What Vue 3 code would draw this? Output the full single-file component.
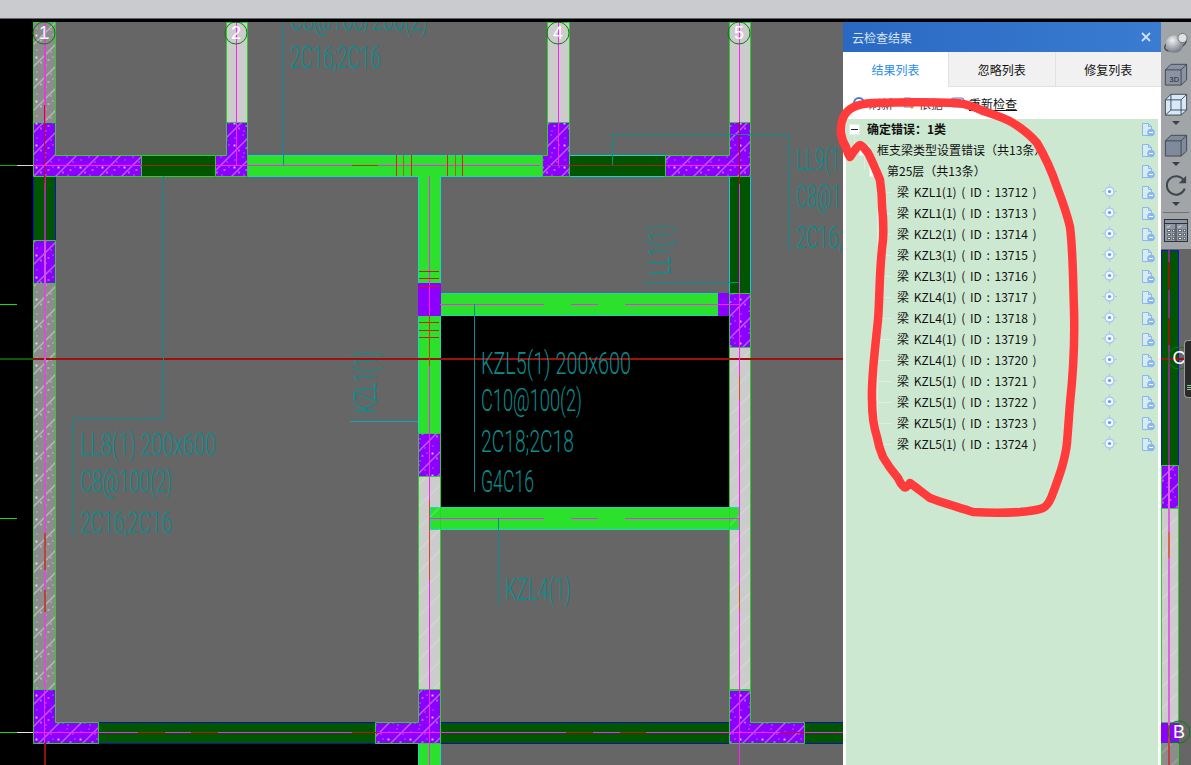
<template>
  <div class="app">
    <div class="titlebar"></div>
    <div class="stage">
      <!-- CAD canvas, coordinates are window pixels -->
      <svg class="cad" width="1191" height="746" viewBox="0 19 1191 746">
        <defs>
          <pattern id="hatch" width="22" height="22" patternUnits="userSpaceOnUse" patternTransform="translate(33 0)">
            <path d="M-2 24 24 -2" stroke="#fff" stroke-opacity=".75" stroke-width="1" />
            <g fill="#fff" fill-opacity=".7">
              <rect x="3" y="5" width="1" height="1" />
              <rect x="14" y="15" width="2" height="1" />
              <rect x="7" y="17" width="1" height="2" />
              <rect x="17" y="7" width="1" height="1" />
              <rect x="11" y="2" width="1" height="1" />
              <rect x="19" y="12" width="1" height="1" />
              <rect x="2" y="12" width="2" height="2" />
              <rect x="12" y="20" width="1" height="1" />
            </g>
          </pattern>
          <pattern id="hatch-soft" width="22" height="22" patternUnits="userSpaceOnUse">
            <path d="M-2 24 24 -2" stroke="#fff" stroke-opacity=".35" stroke-width="1" />
          </pattern>
        </defs>

        <rect x="0" y="19" width="1191" height="746" fill="#000" />
        <rect x="33" y="22" width="1158" height="721" fill="#666" />
        <rect x="418" y="743" width="773" height="22" fill="#666" />
        <rect x="440" y="315" width="289" height="192" fill="#000" />

        <g transform="translate(.5 .5)">
          <path v-for="(d, i) in fills" :key="'f' + i" :d="d.d" :fill="d.fill" :stroke="d.stroke || d.fill" stroke-width="1" />
          <path v-for="(d, i) in hatched" :key="'h' + i" :d="d" fill="url(#hatch)" stroke="#2ccf2c" stroke-width="1" />
          <path v-for="(d, i) in softHatched" :key="'s' + i" :d="d" fill="url(#hatch-soft)" stroke="#2ccf2c" stroke-width="1" />
        </g>

        <rect v-for="(l, i) in drawLines" :key="'l' + i" :x="l.x" :y="l.y" :width="l.w" :height="l.h" :fill="l.c" />

        <g class="cad-text">
          <text v-for="t in labels" :key="t.s + t.y" :x="t.x" :y="t.y" :textLength="t.w" lengthAdjust="spacingAndGlyphs" fill="#0a8c8c">{{ t.s }}</text>
          <text transform="translate(670 275) rotate(-90)" textLength="50" lengthAdjust="spacingAndGlyphs" fill="#0a8c8c">LL1(1)</text>
          <text transform="translate(376 413) rotate(-90)" textLength="62" lengthAdjust="spacingAndGlyphs" fill="#0a8c8c">KZL1(1)</text>
        </g>

        <g v-for="b in bubbles" :key="b.s">
          <circle :cx="b.x" :cy="b.y" r="11" fill="none" stroke="#0b7d0b" />
          <text class="bubble-text" :x="b.x" :y="b.y + 6" text-anchor="middle">{{ b.s }}</text>
        </g>

        <rect x="0" y="19" width="1191" height="3" fill="#000" />
      </svg>

      <!-- dark handle at the right edge -->
      <div class="handle">
        <span></span><span></span><span></span>
      </div>

      <aside class="panel">
        <header class="panel-head">
          <span>云检查结果</span>
          <svg width="10" height="10" viewBox="0 0 10 10"><path d="M1 1 9 9M9 1 1 9" stroke="#cfe0f6" stroke-width="1.8" /></svg>
        </header>
        <nav class="tabs">
          <div class="tab active">结果列表</div>
          <div class="tab">忽略列表</div>
          <div class="tab">修复列表</div>
        </nav>
        <div class="tools">
          <span class="tool">
            <svg width="14" height="14" viewBox="0 0 14 14"><circle cx="7" cy="7" r="5" fill="none" stroke="#3f7fd0" stroke-width="2" /></svg>
            刷新
          </span>
          <span class="tool">
            <svg width="14" height="14" viewBox="0 0 14 14"><path d="M2 2h7v9H2z" fill="#fff" stroke="#5d8fd0" /><path d="M8 9l3 3" stroke="#e8922c" stroke-width="3" /></svg>
            依据
          </span>
          <span class="tool link">
            <svg width="16" height="14" viewBox="0 0 16 14"><rect x="1" y="2" width="13" height="9" rx="2" fill="#cfe4fa" stroke="#4d8ad6" /></svg>
            重新检查
          </span>
        </div>
        <div class="tree">
          <div v-for="(r, i) in rows" :key="i" class="row" :class="'lv' + r.level">
            <span v-if="r.level < 3" class="box"><i v-if="r.level === 0"></i></span>
            <span v-else class="dash"></span>
            <span class="label">{{ r.text }}</span>
            <svg v-if="r.level === 3" class="target" width="15" height="15" viewBox="0 0 15 15">
              <circle cx="7.500" cy="7.500" r="4.500" fill="#f4f8ff" stroke="#a8c8f4" stroke-width="1.400" />
              <circle cx="7.500" cy="7.500" r="1.600" fill="#5f9cec" />
              <path d="M7.500 0v2.500M7.500 12.500V15M0 7.500h2.500M12.500 7.500H15" stroke="#a8c8f4" />
            </svg>
            <svg class="doc" width="14" height="15" viewBox="0 0 14 15">
              <path d="M1.500 1.500h6l3 3V13.500h-9z" fill="#d8ecec" stroke="#8ab6f2" />
              <path d="M7.500 1.500v3h3" fill="none" stroke="#8ab6f2" />
              <circle cx="10" cy="10.500" r="3.800" fill="#8ab6f2" />
              <path d="M8 10.500h4" stroke="#fff" />
            </svg>
          </div>
        </div>
      </aside>

      <div class="rail">
        <svg class="globe" width="24" height="22" viewBox="0 0 24 22">
          <defs>
            <radialGradient id="ball" cx="38%" cy="30%" r="75%">
              <stop offset="0" stop-color="#f0f1f3" />
              <stop offset="1" stop-color="#6d747e" />
            </radialGradient>
          </defs>
          <ellipse cx="11.500" cy="12" rx="11.500" ry="5.500" fill="none" stroke="#4e535a" stroke-width="1.500" transform="rotate(-24 11.500 12)" />
          <circle cx="10.500" cy="12" r="8.800" fill="url(#ball)" />
          <circle cx="18.500" cy="6" r="4.600" fill="#dfe2e5" stroke="#6f747c" />
        </svg>
        <svg class="cube-a" width="24" height="24" viewBox="0 0 26 26">
          <path d="M1.500 8.500 7.500 2.500h17v17l-6 5.500H1.500z" fill="#8a94a4" stroke="#3f444c" />
          <path d="M1.500 8.500h17l6-6M18.500 8.500V25" fill="none" stroke="#3f444c" />
          <text class="rail-3d" x="6" y="22">3D</text>
        </svg>
        <svg width="24" height="24" viewBox="0 0 26 26">
          <path d="M1.500 8.500 7.500 2.500h17v17l-6 5.500H1.500z" fill="#d8e8fb" stroke="#3f444c" />
          <path d="M1.500 8.500h17l6-6M18.500 8.500V25M7.500 2.500v17h17M7.500 19.500l-6 5.500" fill="none" stroke="#3f444c" />
        </svg>
        <i class="caret c-a"></i>
        <svg width="24" height="24" viewBox="0 0 26 26">
          <path d="M1.500 8.500 7.500 2.500h17v17l-6 5.500H1.500z" fill="#7f8a9c" stroke="#3f444c" />
          <path d="M1.500 8.500h17l6-6M18.500 8.500V25" fill="none" stroke="#3f444c" />
        </svg>
        <i class="caret c-b"></i>
        <svg width="24" height="24" viewBox="0 0 26 26">
          <path d="M21.500 8A10 10 0 1 0 22.500 17" fill="none" stroke="#3f4650" stroke-width="2.200" />
          <path d="M24 3v8h-8z" fill="#3f4650" />
        </svg>
        <i class="caret"></i>
        <div class="rail-sep"></div>
        <svg width="24" height="24" viewBox="0 0 24 24">
          <rect x="0.500" y="1.500" width="23" height="22" fill="#8d96a4" stroke="#2e3238" />
          <path d="M.5 5.500h23M12 5.500v18" stroke="#2e3238" />
          <path d="M3 8.500l1 1 2-2M14 8.500l1 1 2-2" fill="none" stroke="#f0f2f4" />
          <path d="M3.500 11.500h3v2h-3zM8.500 11.500h2v2h-2zM3.500 15.500h3v2h-3zM8.500 15.500h2v2h-2zM3.500 19.500h3v2h-3zM8.500 19.500h2v2h-2zM14.500 11.500h3v2h-3zM19.500 11.500h2v2h-2zM14.500 15.500h3v2h-3zM19.500 15.500h2v2h-2zM14.500 19.500h3v2h-3zM19.500 19.500h2v2h-2z" fill="#eef0f2" stroke="#2e3238" stroke-width=".6" />
        </svg>
      </div>

      <!-- red marker drawn on top of the screenshot -->
      <svg class="pen" width="1191" height="746" viewBox="0 19 1191 746">
        <path :d="penPath" fill="none" stroke="#ff3b3b" stroke-width="8.500" stroke-linecap="round" stroke-linejoin="round" />
      </svg>
    </div>
  </div>
</template>

<script setup>
const DARK = '#005500'
const GREEN = '#2be12b'
const PURPLE = '#8c00ff'
const LIGHT = '#cccccc'
const TEAL = '#0a8c8c'
const MAG = '#ff20ff'
const RED = '#c81010'

// base colour of walls, beams and columns
const fills = [
  { d: 'M33 22h22v100H33z', fill: '#8c8c8c', stroke: '#2ccf2c' },
  { d: 'M33 283h22v406H33z', fill: '#8c8c8c', stroke: '#2ccf2c' },
  { d: 'M226 22h21v100h-21zM547 22h22v100h-22z', fill: LIGHT, stroke: '#2ccf2c' },
  { d: 'M729 22h21v100h-21z', fill: LIGHT, stroke: '#2ccf2c' },
  { d: 'M729 347h21v343h-21zM418 476h22v213h-22z', fill: LIGHT, stroke: '#2ccf2c' },
  { d: 'M1161 508h17v214h-17z', fill: LIGHT, stroke: '#18d818' },
  { d: 'M1161 743h17v22h-17z', fill: '#8c8c8c', stroke: '#18d818' },
  { d: 'M247 155h295v21H440v107h-22V176H247z', fill: GREEN, stroke: '#12d8c8' },
  { d: 'M418 315h22v118h-22z', fill: GREEN, stroke: '#12d8c8' },
  { d: 'M418 743h22v22h-22z', fill: GREEN, stroke: '#12d8c8' },
  { d: 'M440 293h289v22H440z', fill: GREEN, stroke: '#12d8c8' },
  { d: 'M430 507h309v22H430z', fill: GREEN, stroke: '#12d8c8' },
  { d: 'M141 155h74v21h-74z', fill: DARK, stroke: '#2ccf2c' },
  { d: 'M569 155h96v21h-96z', fill: DARK, stroke: '#12d8c8' },
  { d: 'M729 176h21v117h-21z', fill: DARK, stroke: '#12c8d8' },
  { d: 'M33 176h22v64H33z', fill: DARK, stroke: '#1010d0' },
  { d: 'M98 722h277v21H98z', fill: DARK, stroke: '#1010b0' },
  { d: 'M440 722h289v21H440z', fill: DARK, stroke: '#1010b0' },
  { d: 'M804 722h39v21h-39z', fill: DARK, stroke: '#1010b0' },
  { d: 'M1161 250h17v215h-17z', fill: DARK, stroke: '#1010e0' },
  { d: 'M33 122h22v33h86v21H33z', fill: PURPLE },
  { d: 'M226 122h21v54h-32v-21h11z', fill: PURPLE },
  { d: 'M547 122h22v54h-27v-21h5z', fill: PURPLE },
  { d: 'M729 122h21v54h-85v-21h64z', fill: PURPLE },
  { d: 'M33 240h22v43H33z', fill: PURPLE },
  { d: 'M729 293h21v54h-21z', fill: PURPLE },
  { d: 'M418 283h22v32h-22z', fill: PURPLE },
  { d: 'M718 293h11v22h-11z', fill: PURPLE },
  { d: 'M418 433h22v43h-22z', fill: PURPLE },
  { d: 'M33 689h22v33h43v21H33z', fill: PURPLE },
  { d: 'M418 689h22v54h-65v-21h43z', fill: PURPLE },
  { d: 'M729 689h21v33h54v21h-75z', fill: PURPLE },
  { d: 'M1161 465h17v43h-17z', fill: PURPLE },
  { d: 'M1161 722h17v21h-17z', fill: PURPLE }
]

// strong hatch on columns, thin hatch on plain walls
const hatched = [
  'M33 122h22v33h86v21H33z',
  'M226 122h21v54h-32v-21h11z',
  'M547 122h22v54h-27v-21h5z',
  'M729 122h21v54h-85v-21h64z',
  'M33 240h22v43H33z',
  'M729 293h21v54h-21z',
  'M418 433h22v43h-22z',
  'M33 689h22v33h43v21H33z',
  'M418 689h22v54h-65v-21h43z',
  'M729 689h21v33h54v21h-75z',
  'M33 22h22v100H33z',
  'M33 283h22v406H33z',
  'M1161 465h17v43h-17z'
]
const softHatched = [
  'M729 347h21v343h-21z',
  'M418 476h22v213h-22z',
  'M1161 508h17v214h-17z',
  'M1161 743h17v22h-17z'
]

// [x1, y1, x2, y2, colour, width]
const lines = [
  // axis lines
  [0, 358, 843, 358, '#a01010', 2],
  [0, 358, 33, 358, '#0a5a0a', 2],
  [1161, 358, 1191, 358, '#a01010', 2],
  [44, 22, 44, 122, '#e040e0', 2],
  [44, 122, 44, 176, MAG, 1],
  [44, 176, 44, 240, '#9a30a0', 2],
  [44, 240, 44, 689, '#d850d8', 2],
  [44, 689, 44, 743, MAG, 1],
  [44, 105, 44, 183, RED, 1],
  [44, 533, 44, 570, '#c04040', 2],
  [44, 590, 44, 612, '#c04040', 2],
  [236, 22, 236, 165, MAG],
  [558, 22, 558, 165, MAG],
  [739, 22, 739, 765, MAG],
  [429, 176, 429, 765, MAG],
  [1168, 250, 1168, 465, '#8a2a8a', 2],
  [1168, 262, 1168, 290, '#8a1a10', 2],
  [1168, 318, 1168, 345, '#8a1a10', 2],
  [1168, 465, 1168, 765, '#e060e0', 2],
  [1168, 532, 1168, 558, '#e06050', 2],
  [1168, 725, 1168, 765, '#c04040', 2],
  [33, 165, 540, 165, MAG],
  [547, 165, 729, 165, '#a030a0'],
  [665, 165, 750, 165, MAG],
  [440, 304, 544, 304, MAG],
  [571, 304, 598, 304, MAG],
  [625, 304, 739, 304, MAG],
  [430, 518, 544, 518, MAG],
  [571, 518, 598, 518, MAG],
  [625, 518, 739, 518, MAG],
  [33, 732, 843, 732, MAG],
  [138, 732, 165, 732, RED, 1],
  [191, 732, 218, 732, RED, 1],
  [352, 732, 380, 732, RED, 1],
  [566, 732, 593, 732, RED, 1],
  [620, 732, 646, 732, RED, 1],
  [780, 732, 804, 732, RED, 1],
  [141, 165, 215, 165, '#a02020'],
  [352, 165, 378, 165, '#c03010'],
  [569, 165, 665, 165, '#a02020'],
  // ticks left of the drawing
  [0, 165, 17, 165, '#10b010'],
  [17, 165, 33, 165, '#d8d8d8'],
  [0, 304, 17, 304, '#10e010'],
  [0, 518, 17, 518, '#10e010'],
  [0, 732, 17, 732, '#10e010'],
  [17, 732, 33, 732, '#e8e8e8'],
  // rebar ticks
  [396, 155, 396, 176, '#e02010'],
  [403, 155, 403, 176, '#b06010'],
  [411, 155, 411, 176, '#e02010'],
  [447, 155, 447, 176, '#e02010'],
  [455, 155, 455, 176, '#b06010'],
  [462, 155, 462, 176, '#e02010'],
  [419, 271, 439, 271, '#c82010'],
  [419, 278, 439, 278, '#c82010'],
  [419, 286, 439, 286, '#e01010'],
  [419, 322, 439, 322, '#c82010'],
  [419, 330, 439, 330, '#c82010'],
  [419, 337, 439, 337, '#c82010'],
  [429, 315, 429, 366, '#c04010'],
  [739, 122, 739, 184, '#b01010'],
  [739, 375, 739, 400, '#d05030'],
  [739, 585, 739, 610, '#d05030'],
  [429, 500, 429, 580, '#d84030'],
  [44, 743, 44, 765, '#901010', 2],
  // leaders
  [283, 22, 283, 165, '#0a8ca0'],
  [163, 176, 163, 419, TEAL],
  [163, 419, 73, 419, TEAL],
  [73, 419, 73, 536, TEAL],
  [474, 304, 474, 492, TEAL],
  [498, 518, 498, 606, TEAL],
  [612, 134, 612, 165, TEAL],
  [612, 134, 788, 134, TEAL],
  [788, 134, 788, 251, TEAL],
  [644, 282, 739, 282, TEAL],
  [350, 421, 418, 421, '#0aa8b8']
]

// plain pixel rects, so every line stays sharp
const drawLines = lines.map(([x1, y1, x2, y2, c, w = 1]) => ({
  x: x1 === x2 ? x1 : Math.min(x1, x2),
  y: y1 === y2 ? y1 : Math.min(y1, y2),
  w: x1 === x2 ? w : Math.abs(x2 - x1),
  h: y1 === y2 ? w : Math.abs(y2 - y1),
  c
}))

const labels = [
  { s: 'C8@100/200(2)', x: 290, y: 30, w: 138 },
  { s: '2C16;2C16', x: 290, y: 68, w: 91 },
  { s: 'LL8(1) 200x600', x: 80, y: 455, w: 136 },
  { s: 'C8@100(2)', x: 80, y: 492, w: 92 },
  { s: '2C16;2C16', x: 80, y: 533, w: 92 },
  { s: 'KZL5(1) 200x600', x: 481, y: 374, w: 150 },
  { s: 'C10@100(2)', x: 481, y: 411, w: 101 },
  { s: '2C18;2C18', x: 481, y: 452, w: 93 },
  { s: 'G4C16', x: 481, y: 492, w: 53 },
  { s: 'KZL4(1)', x: 505, y: 600, w: 66 },
  // the panel hides the rest of these three
  { s: 'LL9(1', x: 796, y: 170, w: 44 },
  { s: 'C8@1', x: 796, y: 207, w: 45 },
  { s: '2C16;', x: 796, y: 248, w: 46 }
]

const bubbles = [
  { s: '1', x: 44, y: 33 },
  { s: '2', x: 236, y: 33 },
  { s: '4', x: 558, y: 33 },
  { s: '5', x: 739, y: 33 },
  { s: 'C', x: 1179, y: 358 },
  { s: 'B', x: 1179, y: 732 }
]

const leafs = [
  ['KZL1', 13712], ['KZL1', 13713], ['KZL2', 13714], ['KZL3', 13715], ['KZL3', 13716],
  ['KZL4', 13717], ['KZL4', 13718], ['KZL4', 13719], ['KZL4', 13720],
  ['KZL5', 13721], ['KZL5', 13722], ['KZL5', 13723], ['KZL5', 13724]
]

const rows = [
  { level: 0, text: '确定错误：1类' },
  { level: 1, text: '框支梁类型设置错误（共13条）' },
  { level: 2, text: '第25层（共13条）' },
  ...leafs.map(([name, id]) => ({ level: 3, text: `梁 ${name}(1) ( ID : ${id} )` }))
]

const penPath = 'M846 147C841 140 839 128 843 118C847 109 855 104 873 103C900 102 935 102 957 103C968 104 975 107 983 111C995 115 1005 118 1013 123C1024 130 1031 136 1037 143C1046 158 1052 172 1057 187C1062 200 1067 214 1070 227C1073 250 1073 280 1074 310C1075 345 1073 375 1070 403C1069 418 1068 430 1067 443C1066 452 1064 460 1062 467C1059 477 1056 485 1053 493C1050 502 1047 506 1043 508C1035 511 1028 511 1020 512C1005 513 990 513 973 512C958 507 943 503 930 498C923 493 917 488 910 483C908 486 905 489 903 486C900 483 899 480 898 478C892 471 887 464 883 457C880 450 878 443 877 437C874 428 872 415 872 400C871 380 875 350 878 320C880 295 879 270 883 240C884 225 883 215 882 206C882 195 881 187 880 180C875 168 872 160 868 153C865 149 863 146 860 145C856 147 853 153 850 157C848 155 847 150 846 147'
</script>

<style scoped>
.app {
  display: flex;
  flex-direction: column;
  width: 1191px;
  height: 765px;
  overflow: hidden;
}

.titlebar {
  flex: none;
  height: 18px;
  background: #c9cbcf;
  border-bottom: 1px solid #62656a;
}

.stage {
  position: relative;
  flex: 1;
  background: #000;
}

.cad,
.pen {
  position: absolute;
  left: 0;
  top: 0;
  display: block;
}

.pen {
  pointer-events: none;
}

.cad-text text {
  font-family: "Roboto", "Liberation Sans", sans-serif;
  font-size: 31px;
  font-weight: 300;
}

.bubble-text {
  font-family: "Liberation Sans", sans-serif;
  font-size: 18px;
  fill: #fff;
}

.handle {
  position: absolute;
  left: 1184px;
  top: 321px;
  width: 7px;
  height: 58px;
  box-sizing: border-box;
  padding: 44px 0 0 2px;
  background: #2a2a2a;
  border: 1px solid #9a9a9a;
  border-right: 0;
  border-radius: 4px 0 0 4px;
  display: flex;
  flex-direction: column;
  gap: 1px;
}

.handle span {
  display: block;
  height: 1px;
  background: #7fd08a;
}

/* Панель результатов */
.panel {
  position: absolute;
  left: 843px;
  top: 3px;
  width: 318px;
  height: 743px;
  display: flex;
  flex-direction: column;
  background: #fff;
  font-family: "Noto Sans CJK SC", "Noto Sans", sans-serif;
  font-size: 12px;
  color: #111;
}

.panel-head {
  flex: none;
  height: 30px;
  padding: 0 9px;
  display: flex;
  align-items: center;
  justify-content: space-between;
  background: linear-gradient(90deg, #2a69c2, #3a7cd2);
  color: #d8e4f4;
}

.panel-head svg {
  margin-right: 1px;
}

.tabs {
  flex: none;
  height: 35px;
  display: flex;
  background: #f1f1f1;
  border-bottom: 1px solid #e2e2e2;
  box-sizing: border-box;
}

.tab {
  flex: 1;
  display: flex;
  align-items: center;
  justify-content: center;
  border-left: 1px solid #e2e2e2;
}

.tab.active {
  flex: none;
  width: 105px;
  margin-bottom: -1px;
  border-left: 0;
  background: #fff;
  color: #2a8cf0;
}

.tools {
  flex: none;
  height: 32px;
  padding: 0 0 0 9px;
  display: flex;
  align-items: center;
  gap: 9px;
  box-sizing: border-box;
}

.tool {
  display: inline-flex;
  align-items: center;
  gap: 3px;
  color: #444;
}

.tool.link {
  color: #111;
  margin-left: -2px;
  text-decoration: underline;
}

.tree {
  position: relative;
  flex: 1;
  margin: 0 3px;
  background: #cce8d0;
}

/* вертикальная линия дерева */
.tree::before {
  content: "";
  position: absolute;
  left: 31px;
  top: 62px;
  width: 1px;
  height: 262px;
  background: #e2ece2;
}

.row {
  position: relative;
  height: 21px;
  display: flex;
  align-items: center;
  white-space: nowrap;
}

.label {
  margin-top: -2px;
}

.lv0 {
  padding-left: 3px;
  font-weight: 700;
}

.lv1 {
  padding-left: 13px;
}

.lv2 {
  padding-left: 23px;
}

.lv3 {
  padding-left: 31px;
  word-spacing: 2px;
}

.lv1::before,
.lv2::before {
  content: "";
  position: absolute;
  top: -5px;
  width: 1px;
  height: 14px;
  background: #e2ece2;
}

.lv1::before {
  left: 8px;
}

.lv2::before {
  left: 18px;
}

.box {
  flex: none;
  width: 11px;
  height: 11px;
  margin-right: 7px;
  background: #fff;
  border: 1px solid #e6ece6;
  box-sizing: border-box;
  display: flex;
  align-items: center;
  justify-content: center;
}

.box i {
  display: block;
  width: 7px;
  height: 1px;
  background: #222;
}

.dash {
  flex: none;
  width: 14px;
  height: 1px;
  margin-right: 6px;
  background: #e2ece2;
}

.doc {
  position: absolute;
  left: 295px;
  top: 3px;
}

.target {
  position: absolute;
  left: 256px;
  top: 2px;
}

.rail {
  position: absolute;
  left: 1161px;
  top: 3px;
  width: 30px;
  height: 227px;
  padding-top: 10px;
  box-sizing: border-box;
  display: flex;
  flex-direction: column;
  align-items: center;
  gap: 5px;
  background: #a2a5a8;
}

.rail svg {
  display: block;
  flex: none;
}

.rail .globe {
  margin-bottom: 3px;
}

.rail .cube-a {
  margin-bottom: 1px;
}

.rail-3d {
  font-family: "Liberation Sans", sans-serif;
  font-size: 8px;
  fill: #22262c;
}

.caret {
  display: block;
  flex: none;
  width: 0;
  height: 0;
  border: 4px solid transparent;
  border-top-color: #3a3f46;
  border-bottom: 0;
}

.caret.c-a {
  margin-bottom: 3px;
}

.caret.c-b {
  margin-bottom: 2px;
}

.rail-sep {
  flex: none;
  width: 26px;
  height: 1px;
  background: #6e7278;
  margin-top: 1px;
}
</style>

<style>
html,
body {
  margin: 0;
  background: #000;
  overflow: hidden;
}
</style>
